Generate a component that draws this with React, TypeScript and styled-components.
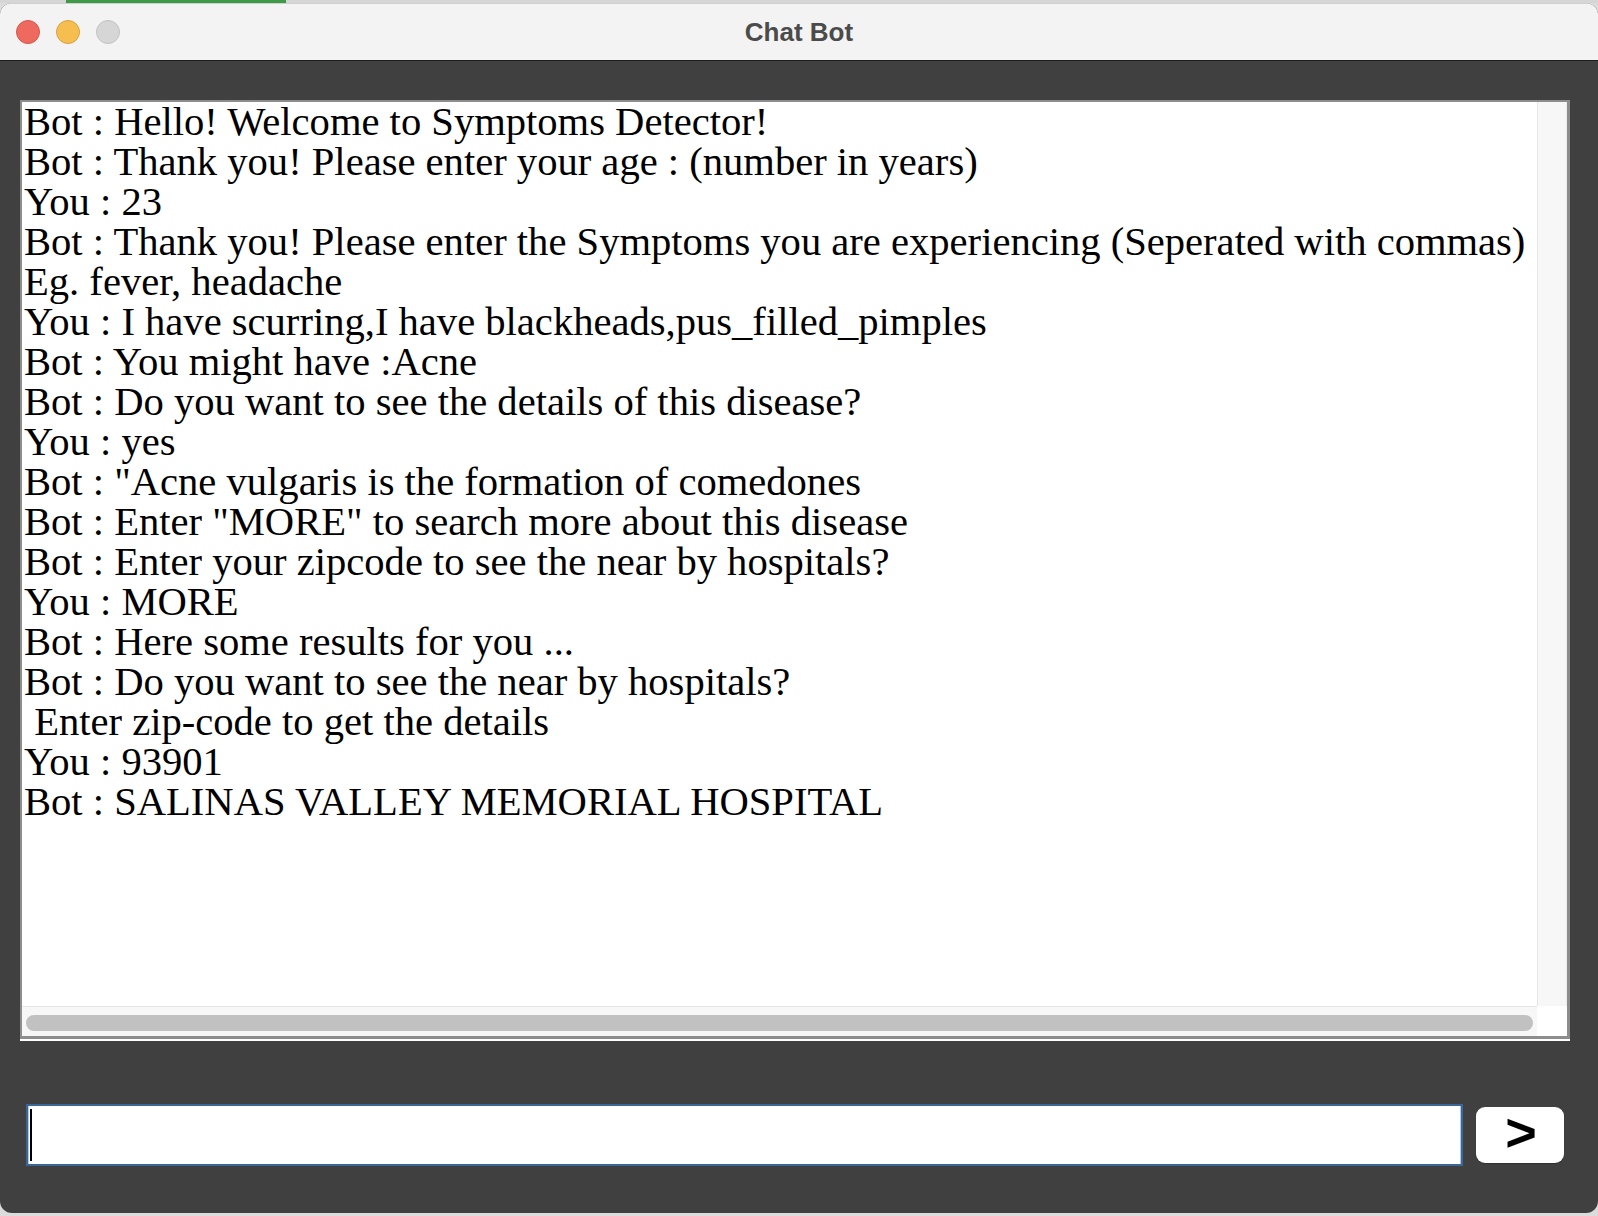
import React from "react";
import styled, { createGlobalStyle } from "styled-components";

const GlobalStyle = createGlobalStyle`
  html, body {
    margin: 0;
    padding: 0;
    width: 1598px;
    height: 1216px;
    overflow: hidden;
    background: #dedede;
  }
  #root {
    width: 1598px;
    height: 1216px;
  }
`;

const Desktop = styled.div`
  width: 1598px;
  height: 1216px;
  display: flex;
  flex-direction: column;
  background: #dcdcdc;
`;

const BehindStrip = styled.div`
  height: 3px;
  display: flex;
  background: #d6d6d6;
`;

const BehindTab = styled.div`
  margin-left: 66px;
  width: 220px;
  background: #3f9a47;
`;

const Window = styled.div`
  width: 1598px;
  height: 1210px;
  display: flex;
  flex-direction: column;
  border-radius: 12px;
  overflow: hidden;
  background: #404040;
`;

const TitleBar = styled.div`
  position: relative;
  height: 57px;
  flex: none;
  display: flex;
  align-items: center;
  background: #f3f3f3;
  border-bottom: 1px solid #1e1e1e;
  box-shadow: inset 0 1px 0 #cfcfcf;
`;

const Lights = styled.div`
  display: flex;
  gap: 16px;
  padding-left: 16px;
  margin-top: 1px;
`;

const Light = styled.span<{ $fill: string; $edge: string }>`
  width: 24px;
  height: 24px;
  box-sizing: border-box;
  border-radius: 50%;
  background: ${(p) => p.$fill};
  border: 1px solid ${(p) => p.$edge};
`;

const Title = styled.div`
  position: absolute;
  left: 0;
  right: 0;
  top: 0;
  bottom: 0;
  display: flex;
  align-items: center;
  justify-content: center;
  font-family: "Liberation Sans", Arial, sans-serif;
  font-weight: 700;
  font-size: 26px;
  color: #4b4b4b;
  padding-top: 1px;
  pointer-events: none;
`;

const Content = styled.div`
  flex: 1;
  display: flex;
  flex-direction: column;
  padding: 39px 28px 0 20px;
`;

const ScrollPane = styled.div`
  height: 939px;
  box-sizing: border-box;
  border: 2px solid #8d8d8d;
  border-right-width: 3px;
  border-bottom-width: 3px;
  box-shadow: 0 2px 0 #ffffff;
  background: #ffffff;
  display: grid;
  grid-template-columns: 1fr 30px;
  grid-template-rows: 1fr 30px;
`;

const TextArea = styled.div`
  padding: 0 0 0 2px;
  overflow: hidden;
  font-family: "Liberation Serif", "Times New Roman", serif;
  font-size: 40.6px;
  line-height: 40px;
  color: #000000;
`;

const Line = styled.div`
  white-space: pre;
`;

const VTrack = styled.div`
  background: #f7f7f7;
  border-left: 1px solid #e6e6e6;
  border-right: 1px solid #ececec;
`;

const HTrack = styled.div`
  background: #f7f7f7;
  border-top: 1px solid #e6e6e6;
  display: flex;
  align-items: center;
  padding: 0 4px;
`;

const Thumb = styled.div`
  flex: 1;
  height: 16px;
  border-radius: 8px;
  background: #c1c1c1;
  margin-top: 2px;
`;

const Corner = styled.div`
  background: #ffffff;
`;

const InputRow = styled.div`
  margin: 65px 6px 0 6px;
  display: flex;
  align-items: center;
  gap: 13px;
`;

const InputField = styled.div`
  flex: 1;
  height: 62px;
  box-sizing: border-box;
  background: #ffffff;
  border: 2px solid #3b6698;
  box-shadow: inset 1px 0 0 #a9c9f0, inset -1px 0 0 #a9c9f0;
  display: flex;
  align-items: center;
  padding-left: 2px;
`;

const Caret = styled.span`
  width: 2px;
  height: 52px;
  background: #000000;
`;

const SendButton = styled.button`
  width: 88px;
  height: 56px;
  flex: none;
  border: none;
  border-radius: 9px;
  background: #ffffff;
  box-shadow: 0 1px 1px rgba(0, 0, 0, 0.25);
  font-family: "Liberation Sans", Arial, sans-serif;
  font-weight: 700;
  font-size: 54px;
  line-height: 1;
  color: #000000;
  display: flex;
  align-items: center;
  justify-content: center;
  padding: 0 0 6px 2px;
  cursor: pointer;
`;

const lines = [
  "Bot : Hello! Welcome to Symptoms Detector!",
  "Bot : Thank you! Please enter your age : (number in years)",
  "You : 23",
  "Bot : Thank you! Please enter the Symptoms you are experiencing (Seperated with commas)",
  "Eg. fever, headache",
  "You : I have scurring,I have blackheads,pus_filled_pimples",
  "Bot : You might have :Acne",
  "Bot : Do you want to see the details of this disease?",
  "You : yes",
  'Bot : "Acne vulgaris is the formation of comedones',
  'Bot : Enter "MORE" to search more about this disease',
  "Bot : Enter your zipcode to see the near by hospitals?",
  "You : MORE",
  "Bot : Here some results for you ...",
  "Bot : Do you want to see the near by hospitals?",
  " Enter zip-code to get the details",
  "You : 93901",
  "Bot : SALINAS VALLEY MEMORIAL HOSPITAL",
];

export default function App() {
  return (
    <>
      <GlobalStyle />
      <Desktop>
        <BehindStrip>
          <BehindTab />
        </BehindStrip>
        <Window>
          <TitleBar>
            <Lights>
              <Light $fill="#ee6a5f" $edge="#d6574c" />
              <Light $fill="#f5be4f" $edge="#d8a23f" />
              <Light $fill="#d6d6d6" $edge="#c2c2c2" />
            </Lights>
            <Title>Chat Bot</Title>
          </TitleBar>
          <Content>
            <ScrollPane>
              <TextArea>
                {lines.map((l, i) => (
                  <Line key={i}>{l}</Line>
                ))}
              </TextArea>
              <VTrack />
              <HTrack>
                <Thumb />
              </HTrack>
              <Corner />
            </ScrollPane>
            <InputRow>
              <InputField>
                <Caret />
              </InputField>
              <SendButton>&gt;</SendButton>
            </InputRow>
          </Content>
        </Window>
      </Desktop>
    </>
  );
}
